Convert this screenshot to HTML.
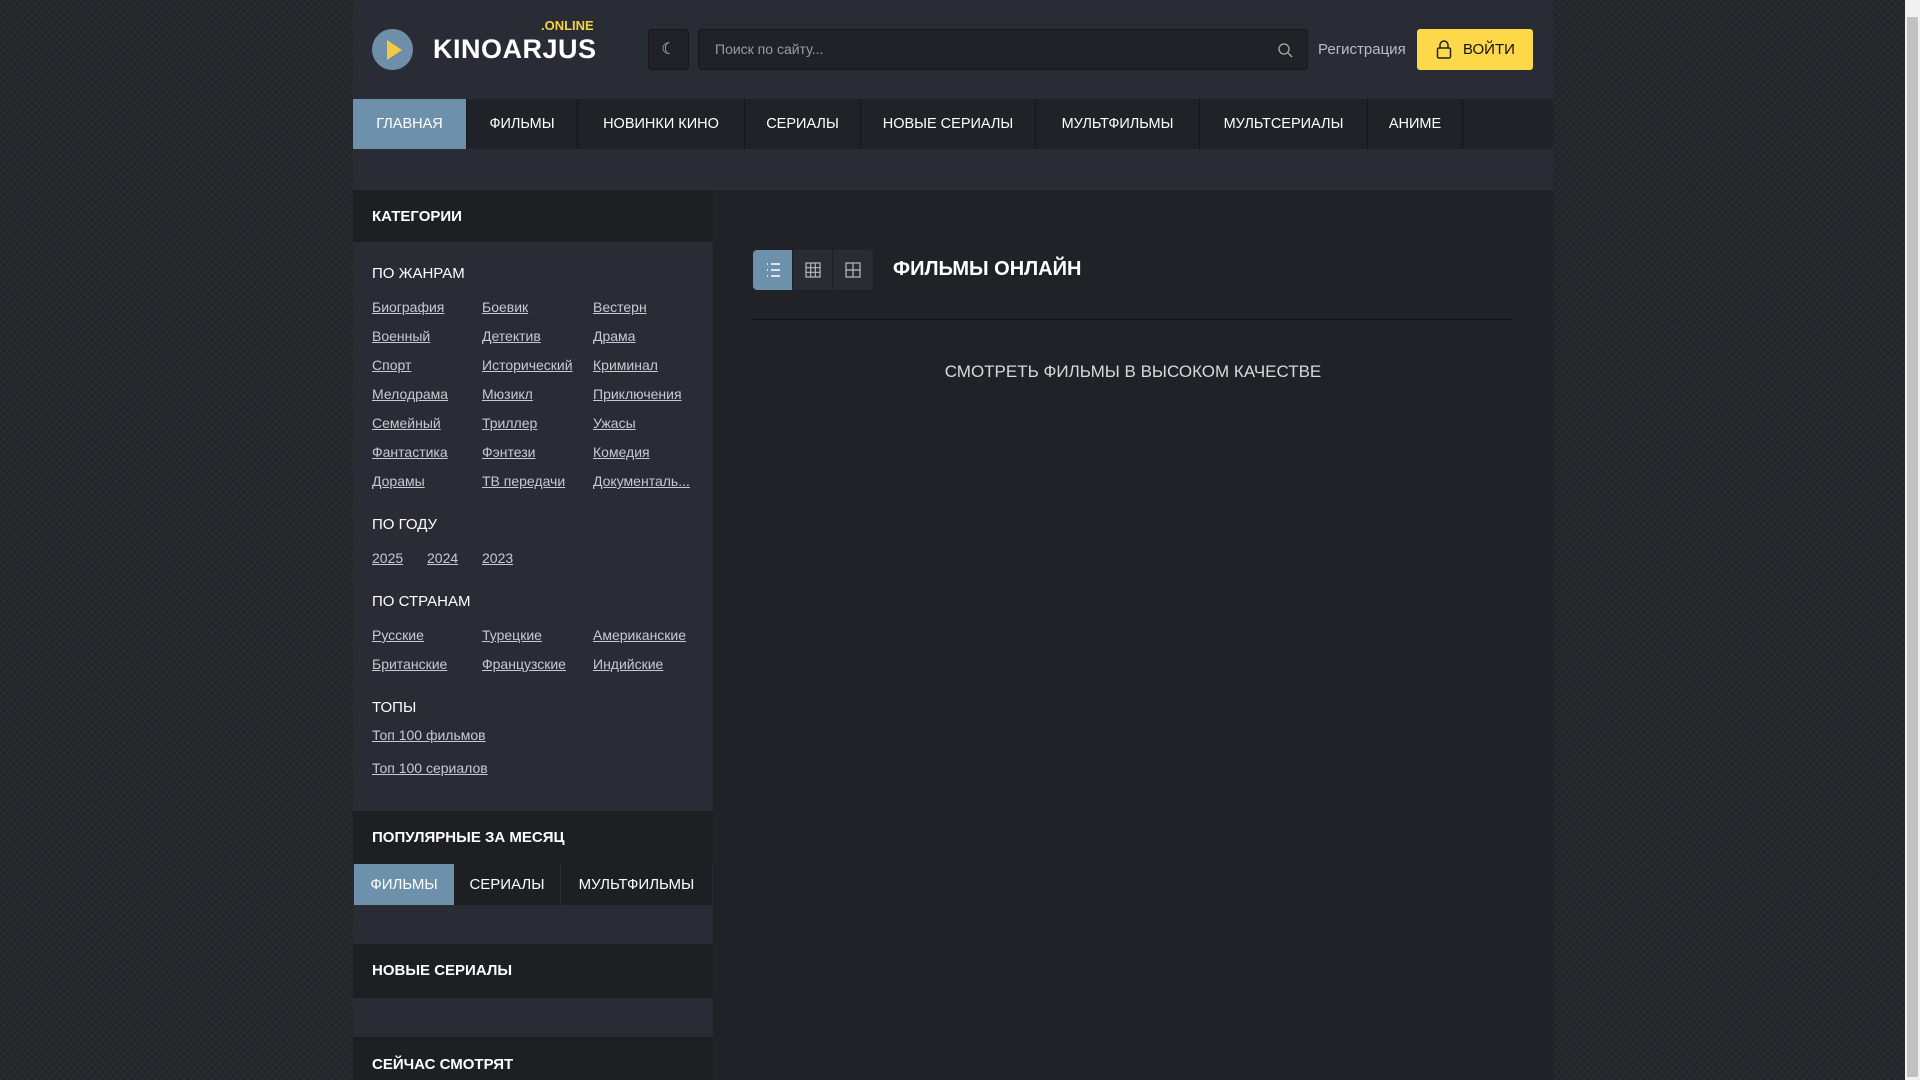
<!DOCTYPE html>
<html><head><meta charset="utf-8"><style>
*{margin:0;padding:0;box-sizing:border-box}
html,body{width:1920px;height:1080px;overflow:hidden}
body{background:#25282c;background-image:repeating-linear-gradient(45deg,rgba(255,255,255,.02) 0 2px,transparent 2px 5px),repeating-linear-gradient(-45deg,rgba(0,0,0,.12) 0 2px,transparent 2px 5px);font-family:"Liberation Sans",sans-serif;color:#fff;position:relative}
.sb{position:absolute;left:1905px;top:0;width:15px;height:1080px;background:#f1f1f1}
.sb div{position:absolute;left:2px;top:17px;width:11px;height:1060px;background:#c1c1c1}
.wrap{position:absolute;left:353px;top:0;width:1200px;height:1080px;background:#202227}
.hdr{position:absolute;left:0;top:0;width:1200px;height:99px;background:#2a2c35}
.a{position:absolute}
.nav{position:absolute;top:99px;left:0;width:1200px;height:50px;background:#202227;display:flex}
.nav div{height:50px;line-height:51px;font-size:14.5px;color:#fff;text-align:center;border-right:1px solid #15161a}
.strip{position:absolute;left:0;width:1200px;background:#2a2c35}
.side{position:absolute;left:0;top:190px;width:360px;height:890px;background:#2a2c35}
.sh{position:absolute;left:0;width:360px;background:#1e1f23;font-weight:bold;font-size:15px;padding-left:19px}
.h{position:absolute;left:19px;font-size:15px;color:#fff}
.l{position:absolute;font-size:14px;color:#c8cad0;text-decoration:underline;white-space:nowrap}
</style></head><body>
<div class="wrap">
 <div class="hdr">
  <div class="a" style="left:19px;top:29px;width:41px;height:41px;border-radius:50%;background:#6f8fa8"></div>
  <div class="a" style="left:34px;top:40px;width:0;height:0;border-left:15px solid #f5c842;border-top:10px solid transparent;border-bottom:10px solid transparent"></div>
  <div class="a" style="left:80px;top:34px;font-size:27px;font-weight:bold;letter-spacing:0.5px">KINOARJUS</div>
  <div class="a" style="left:188px;top:18px;font-size:13px;font-weight:bold;color:#f5d442">.ONLINE</div>
  <div class="a" style="left:295px;top:29px;width:41px;height:41px;border:1px solid #17181c;border-radius:4px;background:#202227;color:#ccc;text-align:center;line-height:39px;font-size:16px">☾</div>
  <div class="a" style="left:345px;top:29px;width:610px;height:41px;border:1px solid #17181c;border-radius:4px;background:#202227;color:#9a9ca3;font-size:14px;line-height:39px;padding-left:16px">Поиск по сайту...
   <svg style="position:absolute;right:14px;top:12px" width="16" height="16" viewBox="0 0 16 16"><circle cx="7" cy="7" r="5" fill="none" stroke="#aaa" stroke-width="1.3"/><path d="M11 11l4 4" stroke="#aaa" stroke-width="1.3"/></svg></div>
  <div class="a" style="left:965px;top:41px;font-size:15px;color:#bbbdc3">Регистрация</div>
  <div class="a" style="left:1064px;top:29px;width:116px;height:41px;border-radius:3px;background:#fdd94a;color:#111;font-size:15px;line-height:41px;padding-left:46px">ВОЙТИ
   <svg style="position:absolute;left:19px;top:11px" width="16" height="19" viewBox="0 0 16 19"><path d="M4 8V5a4 4 0 0 1 8 0v3" fill="none" stroke="#222" stroke-width="1.5"/><rect x="1.5" y="8" width="13" height="10" rx="1.5" fill="none" stroke="#222" stroke-width="1.5"/></svg></div>
 </div>
 <div class="nav">
  <div style="width:114px;background:#6e91ab">ГЛАВНАЯ</div>
  <div style="width:111px">ФИЛЬМЫ</div>
  <div style="width:167px">НОВИНКИ КИНО</div>
  <div style="width:116px">СЕРИАЛЫ</div>
  <div style="width:175px">НОВЫЕ СЕРИАЛЫ</div>
  <div style="width:164px">МУЛЬТФИЛЬМЫ</div>
  <div style="width:168px">МУЛЬТСЕРИАЛЫ</div>
  <div style="width:95px">АНИМЕ</div>
 </div>
 <div class="strip" style="top:149px;height:41px"></div>
 <div class="side">
  <div class="sh" style="top:0;height:52px;line-height:53px">КАТЕГОРИИ</div>
  <div class="h" style="top:75px">ПО ЖАНРАМ</div>
  <div class="l" style="left:19px;top:109px">Биография</div><div class="l" style="left:129px;top:109px">Боевик</div><div class="l" style="left:240px;top:109px">Вестерн</div>
  <div class="l" style="left:19px;top:138px">Военный</div><div class="l" style="left:129px;top:138px">Детектив</div><div class="l" style="left:240px;top:138px">Драма</div>
  <div class="l" style="left:19px;top:167px">Спорт</div><div class="l" style="left:129px;top:167px">Исторический</div><div class="l" style="left:240px;top:167px">Криминал</div>
  <div class="l" style="left:19px;top:196px">Мелодрама</div><div class="l" style="left:129px;top:196px">Мюзикл</div><div class="l" style="left:240px;top:196px">Приключения</div>
  <div class="l" style="left:19px;top:225px">Семейный</div><div class="l" style="left:129px;top:225px">Триллер</div><div class="l" style="left:240px;top:225px">Ужасы</div>
  <div class="l" style="left:19px;top:254px">Фантастика</div><div class="l" style="left:129px;top:254px">Фэнтези</div><div class="l" style="left:240px;top:254px">Комедия</div>
  <div class="l" style="left:19px;top:283px">Дорамы</div><div class="l" style="left:129px;top:283px">ТВ передачи</div><div class="l" style="left:240px;top:283px">Документаль...</div>
  <div class="h" style="top:326px">ПО ГОДУ</div>
  <div class="l" style="left:19px;top:360px">2025</div><div class="l" style="left:74px;top:360px">2024</div><div class="l" style="left:129px;top:360px">2023</div>
  <div class="h" style="top:403px">ПО СТРАНАМ</div>
  <div class="l" style="left:19px;top:437px">Русские</div><div class="l" style="left:129px;top:437px">Турецкие</div><div class="l" style="left:240px;top:437px">Американские</div>
  <div class="l" style="left:19px;top:466px">Британские</div><div class="l" style="left:129px;top:466px">Французские</div><div class="l" style="left:240px;top:466px">Индийские</div>
  <div class="h" style="top:509px">ТОПЫ</div>
  <div class="l" style="left:19px;top:537px">Топ 100 фильмов</div>
  <div class="l" style="left:19px;top:570px">Топ 100 сериалов</div>
  <div class="sh" style="top:621px;height:53px;line-height:53px">ПОПУЛЯРНЫЕ ЗА МЕСЯЦ</div>
  <div class="a" style="left:1px;top:674px;width:358px;height:41px;display:flex;font-size:15px;line-height:42px;text-align:center;background:#1e1f23">
   <div style="width:100px;background:#6e91ab">ФИЛЬМЫ</div>
   <div style="width:107px;border-right:1px solid #2c2e35">СЕРИАЛЫ</div>
   <div style="width:151px">МУЛЬТФИЛЬМЫ</div>
  </div>
  <div class="sh" style="top:754px;height:54px;line-height:54px">НОВЫЕ СЕРИАЛЫ</div>
  <div class="sh" style="top:847px;height:60px;line-height:56px">СЕЙЧАС СМОТРЯТ</div>
 </div>
 <div class="a" style="left:400px;top:250px;width:120px;height:40px;border-radius:4px;background:#2a2c35;display:flex">
  <div style="width:40px;height:40px;background:#6e91ab;border-radius:4px 0 0 4px;border-right:1px solid #1e1f23"><svg width="40" height="40" viewBox="0 0 40 40"><g stroke="#fff" stroke-width="1.6"><path d="M14 14h1M14 20h1M14 26h1M18 14h9M18 20h9M18 26h9"/></g></svg></div>
  <div style="width:40px;height:40px;border-right:1px solid #1e1f23"><svg width="40" height="40" viewBox="0 0 40 40"><g stroke="#bbb" stroke-width="1.2" fill="none"><rect x="13" y="13" width="14" height="14"/><path d="M17.7 13v14M22.3 13v14M13 17.7h14M13 22.3h14"/></g></svg></div>
  <div style="width:40px;height:40px"><svg width="40" height="40" viewBox="0 0 40 40"><g stroke="#bbb" stroke-width="1.2" fill="none"><rect x="13" y="13" width="14" height="14"/><path d="M20 13v14M13 20h14"/></g></svg></div>
 </div>
 <div class="a" style="left:540px;top:258px;font-size:20px;font-weight:bold">ФИЛЬМЫ ОНЛАЙН</div>
 <div class="a" style="left:400px;top:319px;width:760px;height:1px;background:#111214"></div>
 <div class="a" style="left:400px;top:362px;width:760px;text-align:center;font-size:17px;color:#d8d9dc">СМОТРЕТЬ ФИЛЬМЫ В ВЫСОКОМ КАЧЕСТВЕ</div>
</div>
<div class="sb"><div></div></div>
</body></html>
